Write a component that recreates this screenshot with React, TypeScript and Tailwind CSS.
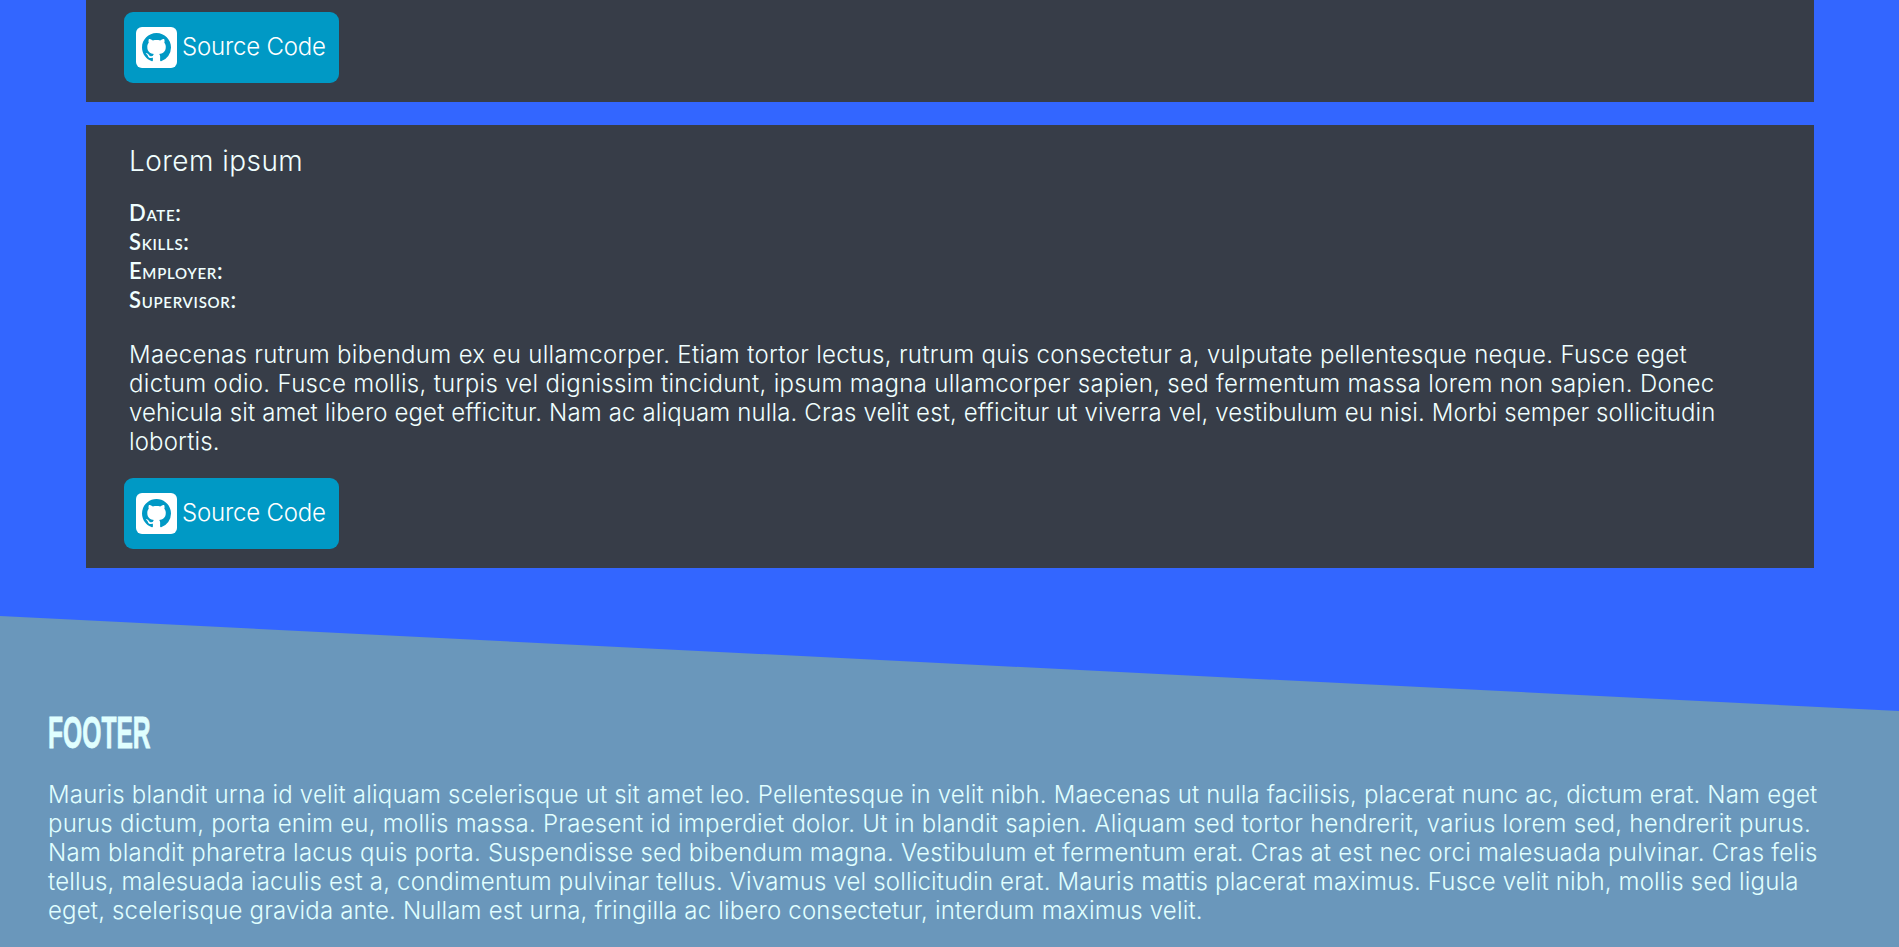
const body = '[font-family:Inter,"Noto_Sans",sans-serif]';

function GithubIcon() {
  return (
    <span className="flex h-[41px] w-[41px] shrink-0 items-center justify-center rounded-[6px] bg-white">
      <svg viewBox="0 0 16 16" className="h-[29px] w-[29px] fill-[#0099c5]">
        <path d="M8 0C3.58 0 0 3.58 0 8c0 3.54 2.29 6.53 5.47 7.59.4.07.55-.17.55-.38 0-.19-.01-.82-.01-1.49-2.01.37-2.53-.49-2.69-.94-.09-.23-.48-.94-.82-1.13-.28-.15-.68-.52-.01-.53.63-.01 1.08.58 1.23.82.72 1.21 1.87.87 2.33.66.07-.52.28-.87.51-1.07-1.78-.2-3.64-.89-3.64-3.95 0-.87.31-1.59.82-2.15-.08-.2-.36-1.02.08-2.12 0 0 .67-.21 2.2.82.64-.18 1.32-.27 2-.27s1.36.09 2 .27c1.53-1.04 2.2-.82 2.2-.82.44 1.1.16 1.92.08 2.12.51.56.82 1.27.82 2.15 0 3.07-1.87 3.75-3.65 3.95.29.25.54.73.54 1.48 0 1.07-.01 1.93-.01 2.2 0 .21.15.46.55.38A8.01 8.01 0 0 0 16 8c0-4.42-3.58-8-8-8z" />
      </svg>
    </span>
  );
}

function SourceButton() {
  return (
    <a className="ml-[38px] flex h-[71px] w-[215px] items-center gap-[5px] rounded-[9px] bg-[#0099c5] pl-[12px] text-white">
      <GithubIcon />
      <span className={`${body} -mt-[2px] text-[24px] font-light tracking-[-0.2px] leading-none`}>Source Code</span>
    </a>
  );
}

const cardLines = [
  { t: "Maecenas rutrum bibendum ex eu ullamcorper. Etiam tortor lectus, rutrum quis consectetur a, vulputate pellentesque neque. Fusce eget", c: "tracking-[0.32px]" },
  { t: "dictum odio. Fusce mollis, turpis vel dignissim tincidunt, ipsum magna ullamcorper sapien, sed fermentum massa lorem non sapien. Donec", c: "tracking-[0.31px]" },
  { t: "vehicula sit amet libero eget efficitur. Nam ac aliquam nulla. Cras velit est, efficitur ut viverra vel, vestibulum eu nisi. Morbi semper sollicitudin", c: "tracking-[0.13px]" },
  { t: "lobortis.", c: "tracking-[0.13px]" },
];

const footerLines = [
  { t: "Mauris blandit urna id velit aliquam scelerisque ut sit amet leo. Pellentesque in velit nibh. Maecenas ut nulla facilisis, placerat nunc ac, dictum erat. Nam eget", c: "tracking-[0.18px]" },
  { t: "purus dictum, porta enim eu, mollis massa. Praesent id imperdiet dolor. Ut in blandit sapien. Aliquam sed tortor hendrerit, varius lorem sed, hendrerit purus.", c: "tracking-[0.25px]" },
  { t: "Nam blandit pharetra lacus quis porta. Suspendisse sed bibendum magna. Vestibulum et fermentum erat. Cras at est nec orci malesuada pulvinar. Cras felis", c: "tracking-[0.24px]" },
  { t: "tellus, malesuada iaculis est a, condimentum pulvinar tellus. Vivamus vel sollicitudin erat. Mauris mattis placerat maximus. Fusce velit nibh, mollis sed ligula", c: "tracking-[0.17px]" },
  { t: "eget, scelerisque gravida ante. Nullam est urna, fringilla ac libero consectetur, interdum maximus velit.", c: "tracking-[0.18px]" },
];

export default function App() {
  return (
    <div className="flex h-[947px] flex-col overflow-hidden bg-[#3366ff]">
      <main className="flex flex-col gap-[23px] pl-[86px] pr-[85px]">
        <section className="flex h-[102px] flex-col bg-[#373d48] pt-[12px]">
          <SourceButton />
        </section>
        <section className="flex h-[443px] flex-col bg-[#373d48] text-[#f0ffff]">
          <h2 className={`${body} ml-[43px] mt-[18px] text-[28px] font-light leading-[36px] tracking-[0.45px]`}>Lorem ipsum</h2>
          <div className='ml-[43px] mt-[19px] [font-family:Lato,"Open_Sans",sans-serif] text-[22px] font-semibold leading-[29px] tracking-[0.7px] [font-variant:small-caps]'>
            <div>Date:</div>
            <div>Skills:</div>
            <div>Employer:</div>
            <div>Supervisor:</div>
          </div>
          <p className={`${body} ml-[43px] mt-[26px] whitespace-nowrap text-[24px] font-light leading-[29px]`}>
            {cardLines.map((l) => <span key={l.t} className={`block ${l.c}`}>{l.t}</span>)}
          </p>
          <div className="mt-[22px]"><SourceButton /></div>
        </section>
      </main>
      <footer className="mt-[48px] flex flex-1 flex-col bg-[#6a97bb] pl-[48px] pt-[93px] text-[#e0ffff] [clip-path:polygon(0_0,100%_95px,100%_100%,0_100%)]">
        <h2 className='origin-left scale-x-[0.56] [font-family:"Liberation_Sans",sans-serif] text-[44px] font-bold uppercase leading-[48px] [-webkit-text-stroke:0.8px_#e0ffff]'>Footer</h2>
        <p className={`${body} mt-[23px] whitespace-nowrap text-[24px] font-light leading-[29px]`}>
          {footerLines.map((l) => <span key={l.t} className={`block ${l.c}`}>{l.t}</span>)}
        </p>
      </footer>
    </div>
  );
}
